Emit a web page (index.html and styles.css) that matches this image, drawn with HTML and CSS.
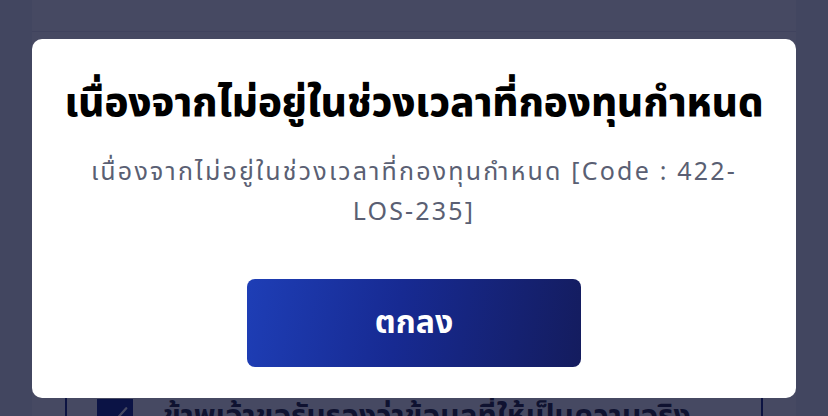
FILE: index.html
```html
<!DOCTYPE html>
<html lang="th">
<head>
    <meta charset="UTF-8">
    <meta name="viewport" content="width=device-width, initial-scale=1.0">
    <title>ตรวจสอบข้อมูล</title>
    <link rel="stylesheet" href="styles.css">
</head>
<body>

    <div class="page">
        <div class="page-header"></div>
        <div class="page-body">
            <div class="consent">
                <span class="check">
                    <svg width="30" height="30" viewBox="0 0 24 24" fill="none" stroke="#ffffff" stroke-width="1.8" stroke-linecap="round" stroke-linejoin="round"><path d="M3 12.5l6 6L21 5"/></svg>
                </span>
                <span class="consent-text">ข้าพเจ้าขอรับรองว่าข้อมูลที่ให้เป็นความจริง</span>
            </div>
        </div>
    </div>

    <div class="overlay">
        <div class="modal">
            <h2 class="modal-title">เนื่องจากไม่อยู่ในช่วงเวลาที่กองทุนกำหนด</h2>
            <p class="modal-text">เนื่องจากไม่อยู่ในช่วงเวลาที่กองทุนกำหนด [Code : 422-LOS-235]</p>
            <button class="btn-ok">ตกลง</button>
        </div>
    </div>

</body>
</html>
```

FILE: styles.css
```css
body {
    margin: 0;
    background: #eef0f6;
    font-family: "Noto Sans Thai", "Noto Sans", sans-serif;
    color: #222;
    overflow: hidden;
}
.page {
    width: 764px;
    margin: 0 auto;
    height: 416px;
    background: #ffffff;
    overflow: hidden;
}
.page-header {
    height: 31px;
    border-bottom: 1px solid #e6e7ec;
}
.page-body {
    padding: 346px 33px 0 33px;
}
.consent {
    display: flex;
    align-items: center;
    gap: 30px;
    border: 2px solid #0f1f7a;
    border-bottom: none;
    padding: 14px 30px;
}
.check {
    width: 36px;
    height: 36px;
    background: #0b1f86;
    display: flex;
    align-items: center;
    justify-content: center;
    flex-shrink: 0;
}
.consent-text {
    font-size: 30px;
    font-weight: 700;
    color: #1a1a2e;
    white-space: nowrap;
}
.overlay {
    position: fixed;
    inset: 0;
    background: rgba(12, 16, 48, 0.76);
    display: flex;
    justify-content: center;
    align-items: flex-start;
    padding-top: 39px;
}
.modal {
    width: 764px;
    height: 359px;
    box-sizing: border-box;
    background: #ffffff;
    border-radius: 10px;
    padding: 38px 30px 0 30px;
    text-align: center;
}
.modal-title {
    margin: 0;
    font-size: 40px;
    font-weight: 800;
    line-height: 54px;
    color: #000000;
    white-space: nowrap;
}
.modal-text {
    margin: 21px 20px 0 20px;
    font-size: 25px;
    line-height: 40px;
    letter-spacing: 2.2px;
    color: #5a5f73;
}
.btn-ok {
    margin-top: 47px;
    width: 334px;
    height: 88px;
    border: none;
    border-radius: 8px;
    background: linear-gradient(100deg, #1e3eb6 0%, #172a92 45%, #141c5e 100%);
    color: #ffffff;
    font-family: inherit;
    font-size: 32px;
    font-weight: 700;
    cursor: pointer;
}
```
